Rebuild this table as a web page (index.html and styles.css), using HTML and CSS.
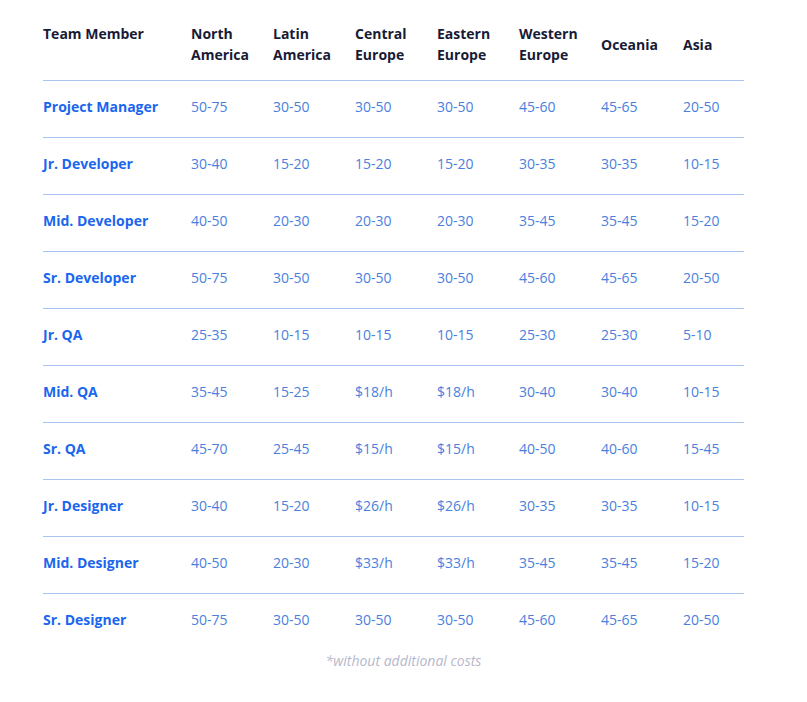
FILE: index.html
```html
<!DOCTYPE html>
<html>
<head>
<meta charset="utf-8">
<link rel="stylesheet" href="styles.css">
</head>
<body>
<div class="wrap">
<table class="rates">
<thead>
<tr>
<th class="first">Team Member</th>
<th>North<br>America</th>
<th>Latin<br>America</th>
<th>Central<br>Europe</th>
<th>Eastern<br>Europe</th>
<th>Western<br>Europe</th>
<th>Oceania</th>
<th class="last">Asia</th>
</tr>
</thead>
<tbody>
<tr><td class="role">Project Manager</td><td>50-75</td><td>30-50</td><td>30-50</td><td>30-50</td><td>45-60</td><td>45-65</td><td>20-50</td></tr>
<tr><td class="role">Jr. Developer</td><td>30-40</td><td>15-20</td><td>15-20</td><td>15-20</td><td>30-35</td><td>30-35</td><td>10-15</td></tr>
<tr><td class="role">Mid. Developer</td><td>40-50</td><td>20-30</td><td>20-30</td><td>20-30</td><td>35-45</td><td>35-45</td><td>15-20</td></tr>
<tr><td class="role">Sr. Developer</td><td>50-75</td><td>30-50</td><td>30-50</td><td>30-50</td><td>45-60</td><td>45-65</td><td>20-50</td></tr>
<tr><td class="role">Jr. QA</td><td>25-35</td><td>10-15</td><td>10-15</td><td>10-15</td><td>25-30</td><td>25-30</td><td>5-10</td></tr>
<tr><td class="role">Mid. QA</td><td>35-45</td><td>15-25</td><td>$18/h</td><td>$18/h</td><td>30-40</td><td>30-40</td><td>10-15</td></tr>
<tr><td class="role">Sr. QA</td><td>45-70</td><td>25-45</td><td>$15/h</td><td>$15/h</td><td>40-50</td><td>40-60</td><td>15-45</td></tr>
<tr><td class="role">Jr. Designer</td><td>30-40</td><td>15-20</td><td>$26/h</td><td>$26/h</td><td>30-35</td><td>30-35</td><td>10-15</td></tr>
<tr><td class="role">Mid. Designer</td><td>40-50</td><td>20-30</td><td>$33/h</td><td>$33/h</td><td>35-45</td><td>35-45</td><td>15-20</td></tr>
<tr><td class="role">Sr. Designer</td><td>50-75</td><td>30-50</td><td>30-50</td><td>30-50</td><td>45-60</td><td>45-65</td><td>20-50</td></tr>
</tbody>
</table>
<p class="note">*without additional costs</p>
</div>
</body>
</html>
```

FILE: styles.css
```css
html, body {
  margin: 0;
  padding: 0;
  background: #ffffff;
}
body {
  font-family: "Open Sans", "Noto Sans", sans-serif;
}
.wrap {
  padding: 8px 0 0 43px;
  width: 701px;
}
.rates {
  border-collapse: collapse;
  width: 701px;
  table-layout: fixed;
}
.rates th {
  font-size: 14px;
  line-height: 21px;
  font-weight: 700;
  color: #181b36;
  text-align: left;
  vertical-align: middle;
  padding: 15px 0 15px 0;
  width: 82px;
  border-bottom: 1px solid #a9c4f2;
}
.rates th.first {
  width: 148px;
  vertical-align: top;
}
.rates th.last {
  width: 61px;
}
.rates td {
  font-size: 14px;
  line-height: 21px;
  color: #4a80de;
  padding: 15px 0 20px 0;
  vertical-align: middle;
  border-bottom: 1px solid #a9c4f2;
}
.rates td.role {
  font-weight: 700;
  color: #1a66ee;
}
.rates tbody tr:last-child td {
  border-bottom: none;
}
.note {
  margin: 2px 0 0 -43px;
  width: 807px;
  text-align: center;
  font-size: 14px;
  line-height: 18px;
  font-style: italic;
  color: #b6b9cd;
}
```
